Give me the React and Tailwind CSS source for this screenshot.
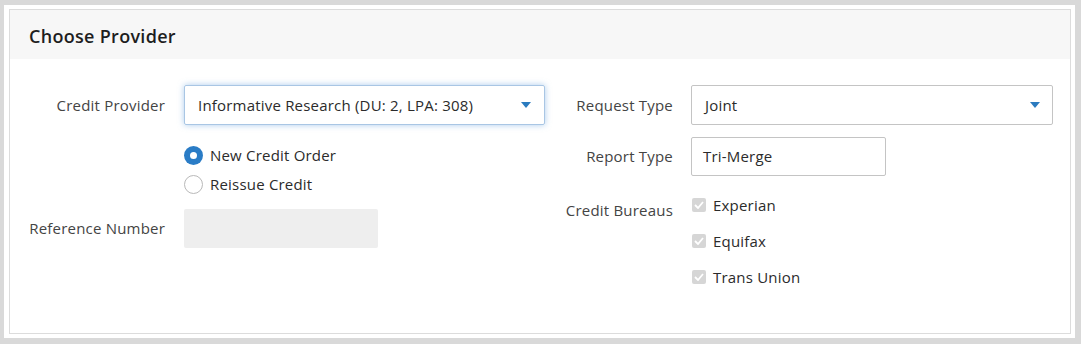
import React from 'react';

const Caret = () => (
  <svg width="10" height="6" viewBox="0 0 10 6" className="shrink-0">
    <path d="M0 0 L10 0 L5 6 Z" fill="#2b7bbf" />
  </svg>
);

const Check = () => (
  <svg width="10" height="8" viewBox="0 0 10 8">
    <path d="M1 4 L4 7 L9 1" fill="none" stroke="#ffffff" strokeWidth="1.8" />
  </svg>
);

const Radio = ({ checked, label }) => (
  <div className="flex items-center gap-[7px] h-[29px]">
    {checked ? (
      <span className="w-[19px] h-[19px] rounded-full bg-[#2a7cc6] flex items-center justify-center">
        <span className="w-[7px] h-[7px] rounded-full bg-white" />
      </span>
    ) : (
      <span className="w-[19px] h-[19px] rounded-full border border-[#b9b9b9] bg-white" />
    )}
    <span>{label}</span>
  </div>
);

const Bureau = ({ label }) => (
  <div className="flex items-center gap-[7px] h-[36px]">
    <span className="w-[14px] h-[14px] rounded-[2px] bg-[#d6d6d6] flex items-center justify-center">
      <Check />
    </span>
    <span>{label}</span>
  </div>
);

export default function App() {
  return (
    <div
      className="w-[1081px] h-[344px] bg-[#d9d9d9] pt-[5px] pl-[4px] pr-[6px] pb-[6px] text-[15px] tracking-[0.2px] text-[#2b2b2b]"
      style={{ fontFamily: '"Open Sans", sans-serif' }}
    >
      <div className="bg-white h-full p-[4px] pl-[5px]">
        <div className="h-full border border-[#dcdcdc] flex flex-col">
          {/* Heading */}
          <div className="h-[49px] bg-[#f7f7f7] flex items-center pl-[19px] pt-[4px]">
            <h2 className="text-[18px] font-semibold tracking-[0.3px] text-[#1e1e1e]">Choose Provider</h2>
          </div>

          <div className="flex pt-[26px]">
            {/* Left column */}
            <div className="flex flex-col">
              <div className="flex items-center">
                <span className="w-[155px] text-right text-[#444]">Credit Provider</span>
                <div className="ml-[19px] w-[361px] h-[40px] border border-[#a9c6e4] rounded-[2px] shadow-[0_0_6px_rgba(102,160,220,0.55)] flex items-center justify-between pl-[13px] pr-[13px]">
                  <span>Informative Research (DU: 2, LPA: 308)</span>
                  <Caret />
                </div>
              </div>
              <div className="ml-[174px] mt-[16px] flex flex-col">
                <Radio checked label="New Credit Order" />
                <Radio label="Reissue Credit" />
              </div>
              <div className="flex items-center mt-[10px]">
                <span className="w-[155px] text-right text-[#444]">Reference Number</span>
                <div className="ml-[19px] w-[194px] h-[39px] bg-[#eeeeee] rounded-[2px]" />
              </div>
            </div>

            {/* Right column */}
            <div className="flex flex-col ml-[10px]">
              <div className="flex items-center">
                <span className="w-[118px] text-right text-[#444]">Request Type</span>
                <div className="ml-[18px] w-[362px] h-[40px] border border-[#c4c4c4] rounded-[2px] flex items-center justify-between pl-[13px] pr-[12px]">
                  <span>Joint</span>
                  <Caret />
                </div>
              </div>
              <div className="flex items-center mt-[12px]">
                <span className="w-[118px] text-right text-[#444]">Report Type</span>
                <div className="ml-[18px] w-[195px] h-[39px] border border-[#c4c4c4] rounded-[2px] flex items-center pl-[11px]">
                  <span>Tri-Merge</span>
                </div>
              </div>
              <div className="flex mt-[11px]">
                <span className="w-[118px] text-right text-[#444] mt-[12px] leading-[22px]">Credit Bureaus</span>
                <div className="ml-[19px] flex flex-col">
                  <Bureau label="Experian" />
                  <Bureau label="Equifax" />
                  <Bureau label="Trans Union" />
                </div>
              </div>
            </div>
          </div>
        </div>
      </div>
    </div>
  );
}
